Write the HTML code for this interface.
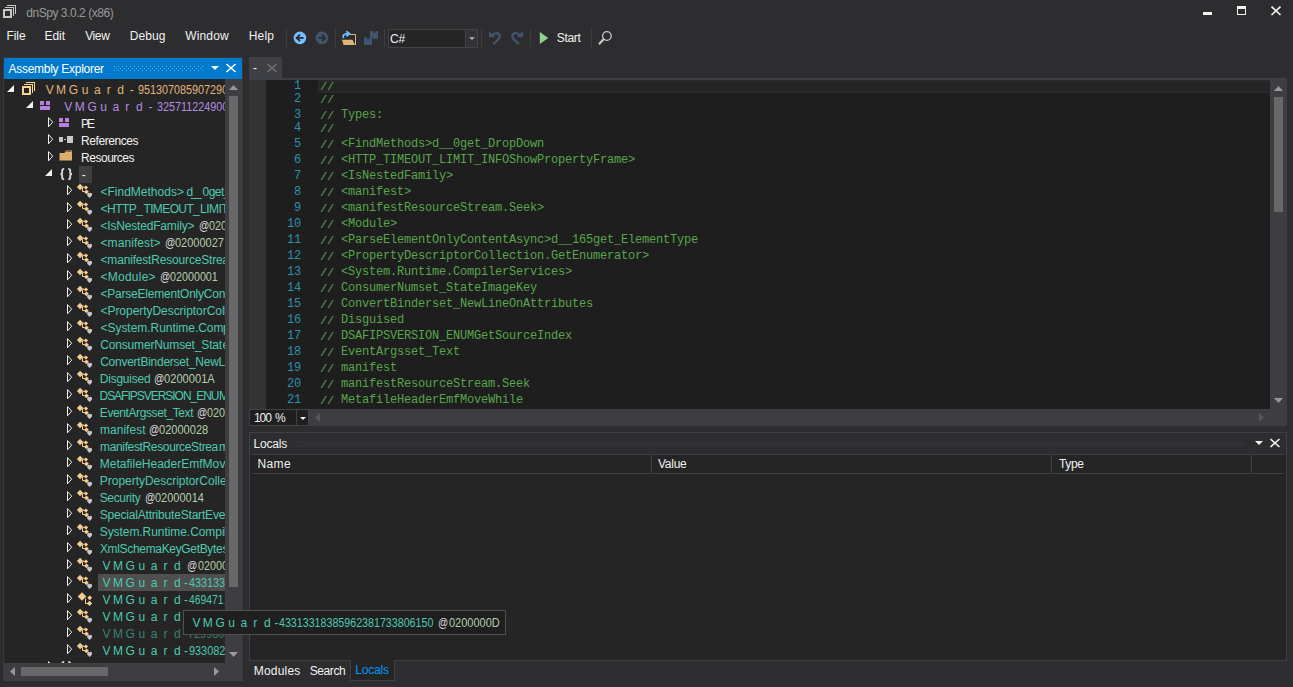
<!DOCTYPE html>
<html><head><meta charset="utf-8"><title>dnSpy</title><style>
*{box-sizing:border-box;margin:0;padding:0}
html,body{width:1293px;height:687px;overflow:hidden;background:#2d2d30}
body{position:relative;font-family:"Liberation Sans",sans-serif;font-size:12px;color:#f1f1f1}
.a{position:absolute}
.t{position:absolute;white-space:pre;line-height:14px;height:14px}
.mono{font-family:"Liberation Mono",monospace;font-size:12px;letter-spacing:-0.2px}
.row{position:absolute;left:0;height:17px;width:400px}
.lbl{position:absolute;top:1px;white-space:pre;line-height:14px;letter-spacing:-0.3px;color:#4ec9b0}
.lbl i{font-style:normal;color:#b5cea8}
.lbl b{font-weight:normal;color:#dcdcdc}
.sp{letter-spacing:5.6px}
svg{position:absolute;overflow:visible}
.cl{position:absolute;left:320px;white-space:pre;color:#57a64a;line-height:14px;height:14px}
.sl{display:inline-block;transform:translateY(1px) scaleY(.86);transform-origin:50% 78.6%}
.ln{position:absolute;left:266px;width:35px;text-align:right;white-space:pre;color:#2b91af;line-height:14px;height:14px}
</style></head><body>
<svg style="left:3px;top:5px" width="13" height="13" viewBox="0 0 13 13" shape-rendering="crispEdges">
<g fill="none" stroke="#c8c8c8">
<rect x="1" y="5" width="7" height="7" stroke-width="2"/>
<path d="M2.5 3V2.5H10.5V10.5H10" stroke-width="1"/>
<path d="M4.5 1V0.5H12.5V8.5H12" stroke-width="1"/>
</g></svg>
<div class="t" style="left:26.20px;letter-spacing:-0.450px;top:6px;color:#999999;">dnSpy 3.0.2 (x86)</div>
<div class="a" style="left:1203px;top:12px;width:9px;height:3px;background:#f1f1f1"></div>
<div class="a" style="left:1237px;top:6px;width:9px;height:9px;border:1px solid #f1f1f1;border-top-width:3px"></div>
<svg style="left:1271px;top:6px" width="10" height="9" viewBox="0 0 10 9"><path d="M0.5 0.6L9.5 9M9.5 0.6L0.5 9" stroke="#f1f1f1" stroke-width="1.7" fill="none"/></svg>
<div class="t" style="left:6.60px;letter-spacing:-0.117px;top:29px;">File</div>
<div class="t" style="left:44.60px;letter-spacing:-0.075px;top:29px;">Edit</div>
<div class="t" style="left:85.20px;letter-spacing:-0.392px;top:29px;">View</div>
<div class="t" style="left:129.80px;letter-spacing:0.094px;top:29px;">Debug</div>
<div class="t" style="left:185.20px;letter-spacing:0.170px;top:29px;">Window</div>
<div class="t" style="left:248.70px;letter-spacing:0.183px;top:29px;">Help</div>
<div class="a" style="left:286px;top:29px;width:1px;height:18px;background:#3d3d41"></div>
<div class="a" style="left:335px;top:29px;width:1px;height:18px;background:#3d3d41"></div>
<div class="a" style="left:384px;top:29px;width:1px;height:18px;background:#3d3d41"></div>
<div class="a" style="left:481px;top:29px;width:1px;height:18px;background:#3d3d41"></div>
<div class="a" style="left:530px;top:29px;width:1px;height:18px;background:#3d3d41"></div>
<div class="a" style="left:591px;top:29px;width:1px;height:18px;background:#3d3d41"></div>
<svg style="left:293px;top:31px" width="14" height="14" viewBox="0 0 14 14"><circle cx="6.9" cy="6.9" r="6.3" fill="#75beff"/><path d="M10.6 6.9H4.4M7 3.6L3.7 6.9L7 10.2" stroke="#2d2d30" stroke-width="1.9" fill="none"/></svg>
<svg style="left:315px;top:31px" width="14" height="14" viewBox="0 0 14 14"><circle cx="7" cy="6.9" r="6.3" fill="#41566e"/><path d="M3.4 6.9H9.6M7 3.6L10.3 6.9L7 10.2" stroke="#2d2d30" stroke-width="1.9" fill="none"/></svg>
<svg style="left:341px;top:30px" width="16" height="16" viewBox="0 0 16 16"><path d="M9 4.5H14.5V15" stroke="#dcb67a" stroke-width="1" fill="none"/><path d="M1 9.8H11.5L14 15H2.6Z" fill="#dcb67a"/><path d="M2.6 8.2C1.2 5.5 3 3.6 6.5 3.6M5.3 1.2L8.6 3.7L5.3 6.3" stroke="#75beff" stroke-width="1.7" fill="none"/></svg>
<svg style="left:364px;top:31px" width="14" height="14" viewBox="0 0 14 14"><path d="M6 0H14V7.7H8.6V6H6ZM9.3 0V1.8H11.7V0Z" fill="#41566e" fill-rule="evenodd"/><path d="M0 6.2H8V14H0ZM2.9 6.2V8H5.3V6.2Z" fill="#41566e" fill-rule="evenodd"/></svg>
<div class="a" style="left:388px;top:29px;width:90px;height:19px;border:1px solid #434346;background:#252526"></div>
<div class="a" style="left:465px;top:30px;width:12px;height:17px;background:#333337;border-left:1px solid #434346"></div>
<svg style="left:469px;top:37px" width="6" height="3" viewBox="0 0 6 3"><path d="M0 0H6L3 3.2Z" fill="#a0a0a0"/></svg>
<div class="t" style="left:389.88px;letter-spacing:0.075px;top:32px;">C#</div>
<svg style="left:489px;top:31px" width="12" height="14" viewBox="0 0 12 14"><path d="M0 0V6.3H6.3Z" fill="#41566e"/><path d="M3.5 4.2C6 0.8 10.7 1.8 10.7 5.4C10.7 7.4 8.5 9.3 4 13.2" stroke="#41566e" stroke-width="2.3" fill="none"/></svg>
<svg style="left:511px;top:31px" width="12" height="14" viewBox="0 0 12 14"><path d="M12 0V6.3H5.7Z" fill="#41566e"/><path d="M8.5 4.2C6 0.8 1.3 1.8 1.3 5.4C1.3 7.4 3.5 9.3 8 13.2" stroke="#41566e" stroke-width="2.3" fill="none"/></svg>
<svg style="left:539px;top:32px" width="10" height="12" viewBox="0 0 10 12"><path d="M0.8 0L9.3 6L0.8 12Z" fill="#8dd28a"/></svg>
<div class="t" style="left:556.70px;letter-spacing:-0.288px;top:31px;">Start</div>
<svg style="left:598px;top:30px" width="15" height="15" viewBox="0 0 15 15"><circle cx="8.9" cy="6" r="4.3" stroke="#c8c8c8" stroke-width="1.3" fill="none"/><path d="M5.6 9.3L1.6 13.6" stroke="#c8c8c8" stroke-width="2.2" stroke-linecap="round"/></svg>
<div class="a" style="left:3px;top:57px;width:240px;height:624px;background:#38383c"></div>
<div class="a" style="left:4px;top:58px;width:238px;height:21px;background:#007acc"></div>
<div class="t" style="left:8.5px;top:62px;color:#fff;letter-spacing:-0.28px">Assembly Explorer</div>
<svg style="left:114px;top:66px" width="89" height="5" viewBox="0 0 89 5" shape-rendering="crispEdges"><defs><pattern id="gb" width="4" height="4" patternUnits="userSpaceOnUse"><rect x="0" y="0" width="1" height="1" fill="#59a8de"/><rect x="2" y="2" width="1" height="1" fill="#59a8de"/></pattern></defs><rect width="89" height="5" fill="url(#gb)"/></svg>
<svg style="left:211px;top:66px" width="8" height="4" viewBox="0 0 8 4"><path d="M0 0H8L4 4Z" fill="#fff"/></svg>
<svg style="left:226px;top:64px" width="10" height="8" viewBox="0 0 10 8"><path d="M0.5 0L9.5 8M9.5 0L0.5 8" stroke="#fff" stroke-width="1.6" fill="none"/></svg>
<div class="a" id="tree" style="left:4px;top:79px;width:221px;height:584px;background:#252526;overflow:hidden">
<div class="row" style="top:1px;"><svg style="left:3px;top:5px" width="7" height="7" viewBox="0 0 7 7"><path d="M7 0V7H0Z" fill="#f1f1f1"/></svg><svg style="left:18px;top:2px" width="13" height="13" viewBox="0 0 13 13" shape-rendering="crispEdges"><g fill="none" stroke="#fbd490">
<rect x="1" y="5" width="7" height="7" stroke-width="2"/><path d="M2.5 3V2.5H10.5V10.5H10" /><path d="M4.5 1V0.5H12.5V8.5H12"/></g></svg><div class="t" style="left:41.70px;letter-spacing:-0.300px;top:3px;color:#e2b47c;">V</div><div class="t" style="left:52.10px;letter-spacing:-0.300px;top:3px;color:#e2b47c;">M</div><div class="t" style="left:64.78px;letter-spacing:-0.300px;top:3px;color:#e2b47c;">G</div><div class="t" style="left:77.65px;letter-spacing:-0.300px;top:3px;color:#e2b47c;">u</div><div class="t" style="left:89.90px;letter-spacing:-0.300px;top:3px;color:#e2b47c;">a</div><div class="t" style="left:102.65px;letter-spacing:-0.300px;top:3px;color:#e2b47c;">r</div><div class="t" style="left:113.30px;letter-spacing:-0.300px;top:3px;color:#e2b47c;">d</div><div class="t" style="left:125.70px;letter-spacing:-0.300px;top:3px;color:#e2b47c;">-</div><div class="t" style="left:133.95px;transform:scaleX(0.9000);transform-origin:0 0;top:3px;color:#e2b47c;">9513070859072900</div></div>
<div class="row" style="top:18px;"><svg style="left:22px;top:4px" width="7" height="7" viewBox="0 0 7 7"><path d="M7 0V7H0Z" fill="#f1f1f1"/></svg><svg style="left:36px;top:4px" width="10" height="9" viewBox="0 0 10 9" shape-rendering="crispEdges"><path d="M0 0H4V4H0ZM6 0H10V4H6ZM0 5H10V9H0Z" fill="#b981dc"/></svg><div class="t" style="left:60.30px;letter-spacing:-0.300px;top:3px;color:#b48be0;">V</div><div class="t" style="left:70.70px;letter-spacing:-0.300px;top:3px;color:#b48be0;">M</div><div class="t" style="left:83.38px;letter-spacing:-0.300px;top:3px;color:#b48be0;">G</div><div class="t" style="left:96.25px;letter-spacing:-0.300px;top:3px;color:#b48be0;">u</div><div class="t" style="left:108.50px;letter-spacing:-0.300px;top:3px;color:#b48be0;">a</div><div class="t" style="left:121.25px;letter-spacing:-0.300px;top:3px;color:#b48be0;">r</div><div class="t" style="left:131.90px;letter-spacing:-0.300px;top:3px;color:#b48be0;">d</div><div class="t" style="left:144.50px;letter-spacing:-0.300px;top:3px;color:#b48be0;">-</div><div class="t" style="left:152.75px;transform:scaleX(0.9000);transform-origin:0 0;top:3px;color:#b48be0;">3257112249000</div></div>
<div class="row" style="top:35px;"><svg style="left:43.5px;top:3px" width="6" height="11" viewBox="0 0 6 11"><path d="M0.5 0.6L4.7 5.2L0.5 9.8Z" fill="none" stroke="#f1f1f1" stroke-width="1"/></svg><svg style="left:55px;top:4px" width="10" height="9" viewBox="0 0 10 9" shape-rendering="crispEdges"><path d="M0 0H4V4H0ZM6 0H10V4H6ZM0 5H10V9H0Z" fill="#b981dc"/></svg><div class="t" style="left:77.10px;letter-spacing:-2.200px;top:3px;color:#f1f1f1;">PE</div></div>
<div class="row" style="top:52px;"><svg style="left:43.5px;top:3px" width="6" height="11" viewBox="0 0 6 11"><path d="M0.5 0.6L4.7 5.2L0.5 9.8Z" fill="none" stroke="#f1f1f1" stroke-width="1"/></svg><svg style="left:55px;top:5px" width="14" height="8" viewBox="0 0 14 8" shape-rendering="crispEdges"><path d="M0 1H4V6H0ZM5 3H7V4H5ZM8 0H14V7H8Z" fill="#c8c8c8"/></svg><div class="t" style="left:77.10px;letter-spacing:-0.433px;top:3px;color:#f1f1f1;">References</div></div>
<div class="row" style="top:69px;"><svg style="left:43.5px;top:3px" width="6" height="11" viewBox="0 0 6 11"><path d="M0.5 0.6L4.7 5.2L0.5 9.8Z" fill="none" stroke="#f1f1f1" stroke-width="1"/></svg><svg style="left:55px;top:2px" width="14" height="11" viewBox="0 0 14 11"><path d="M0.5 3H5.5L7 0.5H13V10.5H0.5Z" fill="#dcb06c"/><path d="M7.3 1.5H12.3" stroke="#252526" stroke-width="0.6"/></svg><div class="t" style="left:77.10px;letter-spacing:-0.488px;top:3px;color:#f1f1f1;">Resources</div></div>
<div class="row" style="top:86px;"><svg style="left:41px;top:4px" width="7" height="7" viewBox="0 0 7 7"><path d="M7 0V7H0Z" fill="#f1f1f1"/></svg><svg style="left:56px;top:3px" width="13" height="13" viewBox="0 0 13 13" fill="none" stroke="#d8d8d8" stroke-width="1.9"><path d="M4.2 0.9C2.3 0.9 2.2 1.6 2.2 2.6V4.4C2.2 5.5 1.8 6.1 0.4 6.1C1.8 6.1 2.2 6.8 2.2 7.8V9.6C2.2 10.7 2.3 11.4 4.2 11.4"/><path d="M8.2 0.9C10.1 0.9 10.2 1.6 10.2 2.6V4.4C10.2 5.5 10.6 6.1 12 6.1C10.6 6.1 10.2 6.8 10.2 7.8V9.6C10.2 10.7 10.1 11.4 8.2 11.4"/></svg><div class="a" style="left:75px;top:1px;width:13px;height:17px;background:#3f3f41"></div><div class="t" style="left:77.80px;letter-spacing:-0.300px;top:3px;color:#f1f1f1;">-</div></div>
<div class="row" style="top:103px;"><svg style="left:62.5px;top:3px" width="6" height="11" viewBox="0 0 6 11"><path d="M0.5 0.6L4.7 5.2L0.5 9.8Z" fill="none" stroke="#f1f1f1" stroke-width="1"/></svg><svg style="left:73px;top:1px" width="16" height="16" viewBox="0 0 16 16">
<path d="M3.1 0.8L6.3 4L3.1 7.2L-0.1 4Z" fill="#f8cc8e"/>
<path d="M8.9 2.4L11.1 4.5L8.9 6.6L6.7 4.5Z" fill="#f8cc8e"/>
<path d="M9.5 6.5L12 8.9L9.5 11.3L7 8.9Z" fill="#f8cc8e"/>
<path d="M5.5 5V8.5H7.6M5.8 4.2H7.2" stroke="#f8cc8e" stroke-width="1" fill="none"/><path d="M12.6 15.1C11.2 13.8 10.1 12.9 10.1 11.6C10.1 10.5 10.8 9.7 11.55 9.7C12.05 9.7 12.45 10.05 12.6 10.5C12.75 10.05 13.15 9.7 13.65 9.7C14.4 9.7 15.1 10.5 15.1 11.6C15.1 12.9 14 13.8 12.6 15.1Z" fill="#c8c8c8" stroke="#252526" stroke-width="0.7" paint-order="stroke"/></svg><div class="t" style="left:96.50px;letter-spacing:0.002px;top:3px;color:#4ec9b0;">&lt;FindMethods&gt;</div><div class="t" style="left:182.50px;letter-spacing:-2.275px;top:3px;color:#4ec9b0;">d__</div><div class="t" style="left:198.50px;letter-spacing:-0.500px;top:3px;color:#4ec9b0;">0get_DropDown</div></div>
<div class="row" style="top:120px;"><svg style="left:62.5px;top:3px" width="6" height="11" viewBox="0 0 6 11"><path d="M0.5 0.6L4.7 5.2L0.5 9.8Z" fill="none" stroke="#f1f1f1" stroke-width="1"/></svg><svg style="left:73px;top:1px" width="16" height="16" viewBox="0 0 16 16">
<path d="M3.1 0.8L6.3 4L3.1 7.2L-0.1 4Z" fill="#f8cc8e"/>
<path d="M8.9 2.4L11.1 4.5L8.9 6.6L6.7 4.5Z" fill="#f8cc8e"/>
<path d="M9.5 6.5L12 8.9L9.5 11.3L7 8.9Z" fill="#f8cc8e"/>
<path d="M5.5 5V8.5H7.6M5.8 4.2H7.2" stroke="#f8cc8e" stroke-width="1" fill="none"/><path d="M12.6 15.1C11.2 13.8 10.1 12.9 10.1 11.6C10.1 10.5 10.8 9.7 11.55 9.7C12.05 9.7 12.45 10.05 12.6 10.5C12.75 10.05 13.15 9.7 13.65 9.7C14.4 9.7 15.1 10.5 15.1 11.6C15.1 12.9 14 13.8 12.6 15.1Z" fill="#c8c8c8" stroke="#252526" stroke-width="0.7" paint-order="stroke"/></svg><div class="t" style="left:96.50px;letter-spacing:-0.510px;top:3px;color:#4ec9b0;">&lt;HTTP_</div><div class="t" style="left:139.45px;letter-spacing:-0.618px;top:3px;color:#4ec9b0;">TIMEOUT_</div><div class="t" style="left:196.00px;letter-spacing:-0.500px;top:3px;color:#4ec9b0;">LIMIT_INFOShowPropertyFrame&gt;</div></div>
<div class="row" style="top:137px;"><svg style="left:62.5px;top:3px" width="6" height="11" viewBox="0 0 6 11"><path d="M0.5 0.6L4.7 5.2L0.5 9.8Z" fill="none" stroke="#f1f1f1" stroke-width="1"/></svg><svg style="left:73px;top:1px" width="16" height="16" viewBox="0 0 16 16">
<path d="M3.1 0.8L6.3 4L3.1 7.2L-0.1 4Z" fill="#f8cc8e"/>
<path d="M8.9 2.4L11.1 4.5L8.9 6.6L6.7 4.5Z" fill="#f8cc8e"/>
<path d="M9.5 6.5L12 8.9L9.5 11.3L7 8.9Z" fill="#f8cc8e"/>
<path d="M5.5 5V8.5H7.6M5.8 4.2H7.2" stroke="#f8cc8e" stroke-width="1" fill="none"/><path d="M12.6 15.1C11.2 13.8 10.1 12.9 10.1 11.6C10.1 10.5 10.8 9.7 11.55 9.7C12.05 9.7 12.45 10.05 12.6 10.5C12.75 10.05 13.15 9.7 13.65 9.7C14.4 9.7 15.1 10.5 15.1 11.6C15.1 12.9 14 13.8 12.6 15.1Z" fill="#c8c8c8" stroke="#252526" stroke-width="0.7" paint-order="stroke"/></svg><div class="t" style="left:96.50px;letter-spacing:-0.183px;top:3px;color:#4ec9b0;">&lt;IsNestedFamily&gt;</div><div class="t" style="left:195.26px;transform:scaleX(0.8488);transform-origin:0 0;top:3px;color:#dcdcdc;">@</div><div class="t" style="left:204.55px;transform:scaleX(0.9000);transform-origin:0 0;top:3px;color:#b5cea8;">02000026</div></div>
<div class="row" style="top:154px;"><svg style="left:62.5px;top:3px" width="6" height="11" viewBox="0 0 6 11"><path d="M0.5 0.6L4.7 5.2L0.5 9.8Z" fill="none" stroke="#f1f1f1" stroke-width="1"/></svg><svg style="left:73px;top:1px" width="16" height="16" viewBox="0 0 16 16">
<path d="M3.1 0.8L6.3 4L3.1 7.2L-0.1 4Z" fill="#f8cc8e"/>
<path d="M8.9 2.4L11.1 4.5L8.9 6.6L6.7 4.5Z" fill="#f8cc8e"/>
<path d="M9.5 6.5L12 8.9L9.5 11.3L7 8.9Z" fill="#f8cc8e"/>
<path d="M5.5 5V8.5H7.6M5.8 4.2H7.2" stroke="#f8cc8e" stroke-width="1" fill="none"/><path d="M12.6 15.1C11.2 13.8 10.1 12.9 10.1 11.6C10.1 10.5 10.8 9.7 11.55 9.7C12.05 9.7 12.45 10.05 12.6 10.5C12.75 10.05 13.15 9.7 13.65 9.7C14.4 9.7 15.1 10.5 15.1 11.6C15.1 12.9 14 13.8 12.6 15.1Z" fill="#c8c8c8" stroke="#252526" stroke-width="0.7" paint-order="stroke"/></svg><div class="t" style="left:96.50px;letter-spacing:0.081px;top:3px;color:#4ec9b0;">&lt;manifest&gt;</div><div class="t" style="left:161.06px;transform:scaleX(0.8488);transform-origin:0 0;top:3px;color:#dcdcdc;">@</div><div class="t" style="left:170.94px;transform:scaleX(0.9165);transform-origin:0 0;top:3px;color:#b5cea8;">02000027</div></div>
<div class="row" style="top:171px;"><svg style="left:62.5px;top:3px" width="6" height="11" viewBox="0 0 6 11"><path d="M0.5 0.6L4.7 5.2L0.5 9.8Z" fill="none" stroke="#f1f1f1" stroke-width="1"/></svg><svg style="left:73px;top:1px" width="16" height="16" viewBox="0 0 16 16">
<path d="M3.1 0.8L6.3 4L3.1 7.2L-0.1 4Z" fill="#f8cc8e"/>
<path d="M8.9 2.4L11.1 4.5L8.9 6.6L6.7 4.5Z" fill="#f8cc8e"/>
<path d="M9.5 6.5L12 8.9L9.5 11.3L7 8.9Z" fill="#f8cc8e"/>
<path d="M5.5 5V8.5H7.6M5.8 4.2H7.2" stroke="#f8cc8e" stroke-width="1" fill="none"/><path d="M12.6 15.1C11.2 13.8 10.1 12.9 10.1 11.6C10.1 10.5 10.8 9.7 11.55 9.7C12.05 9.7 12.45 10.05 12.6 10.5C12.75 10.05 13.15 9.7 13.65 9.7C14.4 9.7 15.1 10.5 15.1 11.6C15.1 12.9 14 13.8 12.6 15.1Z" fill="#c8c8c8" stroke="#252526" stroke-width="0.7" paint-order="stroke"/></svg><div class="t" style="left:96.50px;letter-spacing:-0.176px;top:3px;color:#4ec9b0;">&lt;manifestResourceStre</div><div class="t" style="left:218.30px;letter-spacing:-0.300px;top:3px;color:#4ec9b0;">am.Seek&gt;</div></div>
<div class="row" style="top:188px;"><svg style="left:62.5px;top:3px" width="6" height="11" viewBox="0 0 6 11"><path d="M0.5 0.6L4.7 5.2L0.5 9.8Z" fill="none" stroke="#f1f1f1" stroke-width="1"/></svg><svg style="left:73px;top:1px" width="16" height="16" viewBox="0 0 16 16">
<path d="M3.1 0.8L6.3 4L3.1 7.2L-0.1 4Z" fill="#f8cc8e"/>
<path d="M8.9 2.4L11.1 4.5L8.9 6.6L6.7 4.5Z" fill="#f8cc8e"/>
<path d="M9.5 6.5L12 8.9L9.5 11.3L7 8.9Z" fill="#f8cc8e"/>
<path d="M5.5 5V8.5H7.6M5.8 4.2H7.2" stroke="#f8cc8e" stroke-width="1" fill="none"/><path d="M12.6 15.1C11.2 13.8 10.1 12.9 10.1 11.6C10.1 10.5 10.8 9.7 11.55 9.7C12.05 9.7 12.45 10.05 12.6 10.5C12.75 10.05 13.15 9.7 13.65 9.7C14.4 9.7 15.1 10.5 15.1 11.6C15.1 12.9 14 13.8 12.6 15.1Z" fill="#c8c8c8" stroke="#252526" stroke-width="0.7" paint-order="stroke"/></svg><div class="t" style="left:96.50px;letter-spacing:0.246px;top:3px;color:#4ec9b0;">&lt;Module&gt;</div><div class="t" style="left:156.06px;transform:scaleX(0.8488);transform-origin:0 0;top:3px;color:#dcdcdc;">@</div><div class="t" style="left:166.45px;transform:scaleX(0.8955);transform-origin:0 0;top:3px;color:#b5cea8;">02000001</div></div>
<div class="row" style="top:205px;"><svg style="left:62.5px;top:3px" width="6" height="11" viewBox="0 0 6 11"><path d="M0.5 0.6L4.7 5.2L0.5 9.8Z" fill="none" stroke="#f1f1f1" stroke-width="1"/></svg><svg style="left:73px;top:1px" width="16" height="16" viewBox="0 0 16 16">
<path d="M3.1 0.8L6.3 4L3.1 7.2L-0.1 4Z" fill="#f8cc8e"/>
<path d="M8.9 2.4L11.1 4.5L8.9 6.6L6.7 4.5Z" fill="#f8cc8e"/>
<path d="M9.5 6.5L12 8.9L9.5 11.3L7 8.9Z" fill="#f8cc8e"/>
<path d="M5.5 5V8.5H7.6M5.8 4.2H7.2" stroke="#f8cc8e" stroke-width="1" fill="none"/><path d="M12.6 15.1C11.2 13.8 10.1 12.9 10.1 11.6C10.1 10.5 10.8 9.7 11.55 9.7C12.05 9.7 12.45 10.05 12.6 10.5C12.75 10.05 13.15 9.7 13.65 9.7C14.4 9.7 15.1 10.5 15.1 11.6C15.1 12.9 14 13.8 12.6 15.1Z" fill="#c8c8c8" stroke="#252526" stroke-width="0.7" paint-order="stroke"/></svg><div class="t" style="left:96.50px;letter-spacing:-0.218px;top:3px;color:#4ec9b0;">&lt;ParseElementOnlyCon</div><div class="t" style="left:221.47px;letter-spacing:-0.300px;top:3px;color:#4ec9b0;">tentAsync&gt;</div></div>
<div class="row" style="top:222px;"><svg style="left:62.5px;top:3px" width="6" height="11" viewBox="0 0 6 11"><path d="M0.5 0.6L4.7 5.2L0.5 9.8Z" fill="none" stroke="#f1f1f1" stroke-width="1"/></svg><svg style="left:73px;top:1px" width="16" height="16" viewBox="0 0 16 16">
<path d="M3.1 0.8L6.3 4L3.1 7.2L-0.1 4Z" fill="#f8cc8e"/>
<path d="M8.9 2.4L11.1 4.5L8.9 6.6L6.7 4.5Z" fill="#f8cc8e"/>
<path d="M9.5 6.5L12 8.9L9.5 11.3L7 8.9Z" fill="#f8cc8e"/>
<path d="M5.5 5V8.5H7.6M5.8 4.2H7.2" stroke="#f8cc8e" stroke-width="1" fill="none"/><path d="M12.6 15.1C11.2 13.8 10.1 12.9 10.1 11.6C10.1 10.5 10.8 9.7 11.55 9.7C12.05 9.7 12.45 10.05 12.6 10.5C12.75 10.05 13.15 9.7 13.65 9.7C14.4 9.7 15.1 10.5 15.1 11.6C15.1 12.9 14 13.8 12.6 15.1Z" fill="#c8c8c8" stroke="#252526" stroke-width="0.7" paint-order="stroke"/></svg><div class="t" style="left:96.50px;letter-spacing:-0.045px;top:3px;color:#4ec9b0;">&lt;PropertyDescriptorCol</div><div class="t" style="left:220.05px;letter-spacing:-0.300px;top:3px;color:#4ec9b0;">lection</div></div>
<div class="row" style="top:239px;"><svg style="left:62.5px;top:3px" width="6" height="11" viewBox="0 0 6 11"><path d="M0.5 0.6L4.7 5.2L0.5 9.8Z" fill="none" stroke="#f1f1f1" stroke-width="1"/></svg><svg style="left:73px;top:1px" width="16" height="16" viewBox="0 0 16 16">
<path d="M3.1 0.8L6.3 4L3.1 7.2L-0.1 4Z" fill="#f8cc8e"/>
<path d="M8.9 2.4L11.1 4.5L8.9 6.6L6.7 4.5Z" fill="#f8cc8e"/>
<path d="M9.5 6.5L12 8.9L9.5 11.3L7 8.9Z" fill="#f8cc8e"/>
<path d="M5.5 5V8.5H7.6M5.8 4.2H7.2" stroke="#f8cc8e" stroke-width="1" fill="none"/><path d="M12.6 15.1C11.2 13.8 10.1 12.9 10.1 11.6C10.1 10.5 10.8 9.7 11.55 9.7C12.05 9.7 12.45 10.05 12.6 10.5C12.75 10.05 13.15 9.7 13.65 9.7C14.4 9.7 15.1 10.5 15.1 11.6C15.1 12.9 14 13.8 12.6 15.1Z" fill="#c8c8c8" stroke="#252526" stroke-width="0.7" paint-order="stroke"/></svg><div class="t" style="left:96.50px;letter-spacing:-0.039px;top:3px;color:#4ec9b0;">&lt;System.Runtime.Com</div><div class="t" style="left:219.05px;letter-spacing:-0.300px;top:3px;color:#4ec9b0;">pilerServices&gt;</div></div>
<div class="row" style="top:256px;"><svg style="left:62.5px;top:3px" width="6" height="11" viewBox="0 0 6 11"><path d="M0.5 0.6L4.7 5.2L0.5 9.8Z" fill="none" stroke="#f1f1f1" stroke-width="1"/></svg><svg style="left:73px;top:1px" width="16" height="16" viewBox="0 0 16 16">
<path d="M3.1 0.8L6.3 4L3.1 7.2L-0.1 4Z" fill="#f8cc8e"/>
<path d="M8.9 2.4L11.1 4.5L8.9 6.6L6.7 4.5Z" fill="#f8cc8e"/>
<path d="M9.5 6.5L12 8.9L9.5 11.3L7 8.9Z" fill="#f8cc8e"/>
<path d="M5.5 5V8.5H7.6M5.8 4.2H7.2" stroke="#f8cc8e" stroke-width="1" fill="none"/><path d="M12.6 15.1C11.2 13.8 10.1 12.9 10.1 11.6C10.1 10.5 10.8 9.7 11.55 9.7C12.05 9.7 12.45 10.05 12.6 10.5C12.75 10.05 13.15 9.7 13.65 9.7C14.4 9.7 15.1 10.5 15.1 11.6C15.1 12.9 14 13.8 12.6 15.1Z" fill="#c8c8c8" stroke="#252526" stroke-width="0.7" paint-order="stroke"/></svg><div class="t" style="left:96.17px;letter-spacing:-0.150px;top:3px;color:#4ec9b0;">ConsumerNumset_Stat</div><div class="t" style="left:218.40px;letter-spacing:-0.300px;top:3px;color:#4ec9b0;">eImageKey</div></div>
<div class="row" style="top:273px;"><svg style="left:62.5px;top:3px" width="6" height="11" viewBox="0 0 6 11"><path d="M0.5 0.6L4.7 5.2L0.5 9.8Z" fill="none" stroke="#f1f1f1" stroke-width="1"/></svg><svg style="left:73px;top:1px" width="16" height="16" viewBox="0 0 16 16">
<path d="M3.1 0.8L6.3 4L3.1 7.2L-0.1 4Z" fill="#f8cc8e"/>
<path d="M8.9 2.4L11.1 4.5L8.9 6.6L6.7 4.5Z" fill="#f8cc8e"/>
<path d="M9.5 6.5L12 8.9L9.5 11.3L7 8.9Z" fill="#f8cc8e"/>
<path d="M5.5 5V8.5H7.6M5.8 4.2H7.2" stroke="#f8cc8e" stroke-width="1" fill="none"/><path d="M12.6 15.1C11.2 13.8 10.1 12.9 10.1 11.6C10.1 10.5 10.8 9.7 11.55 9.7C12.05 9.7 12.45 10.05 12.6 10.5C12.75 10.05 13.15 9.7 13.65 9.7C14.4 9.7 15.1 10.5 15.1 11.6C15.1 12.9 14 13.8 12.6 15.1Z" fill="#c8c8c8" stroke="#252526" stroke-width="0.7" paint-order="stroke"/></svg><div class="t" style="left:96.17px;letter-spacing:-0.250px;top:3px;color:#4ec9b0;">ConvertBinderset_NewL</div><div class="t" style="left:221.25px;letter-spacing:-0.300px;top:3px;color:#4ec9b0;">ineOnAttributes</div></div>
<div class="row" style="top:290px;"><svg style="left:62.5px;top:3px" width="6" height="11" viewBox="0 0 6 11"><path d="M0.5 0.6L4.7 5.2L0.5 9.8Z" fill="none" stroke="#f1f1f1" stroke-width="1"/></svg><svg style="left:73px;top:1px" width="16" height="16" viewBox="0 0 16 16">
<path d="M3.1 0.8L6.3 4L3.1 7.2L-0.1 4Z" fill="#f8cc8e"/>
<path d="M8.9 2.4L11.1 4.5L8.9 6.6L6.7 4.5Z" fill="#f8cc8e"/>
<path d="M9.5 6.5L12 8.9L9.5 11.3L7 8.9Z" fill="#f8cc8e"/>
<path d="M5.5 5V8.5H7.6M5.8 4.2H7.2" stroke="#f8cc8e" stroke-width="1" fill="none"/><path d="M12.6 15.1C11.2 13.8 10.1 12.9 10.1 11.6C10.1 10.5 10.8 9.7 11.55 9.7C12.05 9.7 12.45 10.05 12.6 10.5C12.75 10.05 13.15 9.7 13.65 9.7C14.4 9.7 15.1 10.5 15.1 11.6C15.1 12.9 14 13.8 12.6 15.1Z" fill="#c8c8c8" stroke="#252526" stroke-width="0.7" paint-order="stroke"/></svg><div class="t" style="left:95.80px;letter-spacing:-0.234px;top:3px;color:#4ec9b0;">Disguised</div><div class="t" style="left:150.36px;transform:scaleX(0.8488);transform-origin:0 0;top:3px;color:#dcdcdc;">@</div><div class="t" style="left:160.34px;transform:scaleX(0.9272);transform-origin:0 0;top:3px;color:#b5cea8;">0200001A</div></div>
<div class="row" style="top:307px;"><svg style="left:62.5px;top:3px" width="6" height="11" viewBox="0 0 6 11"><path d="M0.5 0.6L4.7 5.2L0.5 9.8Z" fill="none" stroke="#f1f1f1" stroke-width="1"/></svg><svg style="left:73px;top:1px" width="16" height="16" viewBox="0 0 16 16">
<path d="M3.1 0.8L6.3 4L3.1 7.2L-0.1 4Z" fill="#f8cc8e"/>
<path d="M8.9 2.4L11.1 4.5L8.9 6.6L6.7 4.5Z" fill="#f8cc8e"/>
<path d="M9.5 6.5L12 8.9L9.5 11.3L7 8.9Z" fill="#f8cc8e"/>
<path d="M5.5 5V8.5H7.6M5.8 4.2H7.2" stroke="#f8cc8e" stroke-width="1" fill="none"/><path d="M12.6 15.1C11.2 13.8 10.1 12.9 10.1 11.6C10.1 10.5 10.8 9.7 11.55 9.7C12.05 9.7 12.45 10.05 12.6 10.5C12.75 10.05 13.15 9.7 13.65 9.7C14.4 9.7 15.1 10.5 15.1 11.6C15.1 12.9 14 13.8 12.6 15.1Z" fill="#c8c8c8" stroke="#252526" stroke-width="0.7" paint-order="stroke"/></svg><div class="t" style="left:95.50px;letter-spacing:-1.024px;top:3px;color:#4ec9b0;">DSAFIPSVERSION_ENU</div><div class="t" style="left:215.10px;letter-spacing:-0.300px;top:3px;color:#4ec9b0;">MGetSourceIndex</div></div>
<div class="row" style="top:324px;"><svg style="left:62.5px;top:3px" width="6" height="11" viewBox="0 0 6 11"><path d="M0.5 0.6L4.7 5.2L0.5 9.8Z" fill="none" stroke="#f1f1f1" stroke-width="1"/></svg><svg style="left:73px;top:1px" width="16" height="16" viewBox="0 0 16 16">
<path d="M3.1 0.8L6.3 4L3.1 7.2L-0.1 4Z" fill="#f8cc8e"/>
<path d="M8.9 2.4L11.1 4.5L8.9 6.6L6.7 4.5Z" fill="#f8cc8e"/>
<path d="M9.5 6.5L12 8.9L9.5 11.3L7 8.9Z" fill="#f8cc8e"/>
<path d="M5.5 5V8.5H7.6M5.8 4.2H7.2" stroke="#f8cc8e" stroke-width="1" fill="none"/><path d="M12.6 15.1C11.2 13.8 10.1 12.9 10.1 11.6C10.1 10.5 10.8 9.7 11.55 9.7C12.05 9.7 12.45 10.05 12.6 10.5C12.75 10.05 13.15 9.7 13.65 9.7C14.4 9.7 15.1 10.5 15.1 11.6C15.1 12.9 14 13.8 12.6 15.1Z" fill="#c8c8c8" stroke="#252526" stroke-width="0.7" paint-order="stroke"/></svg><div class="t" style="left:95.80px;letter-spacing:-0.394px;top:3px;color:#4ec9b0;">EventArgsset_Text</div><div class="t" style="left:193.26px;transform:scaleX(0.8488);transform-origin:0 0;top:3px;color:#dcdcdc;">@</div><div class="t" style="left:203.35px;transform:scaleX(0.9000);transform-origin:0 0;top:3px;color:#b5cea8;">0200001C</div></div>
<div class="row" style="top:341px;"><svg style="left:62.5px;top:3px" width="6" height="11" viewBox="0 0 6 11"><path d="M0.5 0.6L4.7 5.2L0.5 9.8Z" fill="none" stroke="#f1f1f1" stroke-width="1"/></svg><svg style="left:73px;top:1px" width="16" height="16" viewBox="0 0 16 16">
<path d="M3.1 0.8L6.3 4L3.1 7.2L-0.1 4Z" fill="#f8cc8e"/>
<path d="M8.9 2.4L11.1 4.5L8.9 6.6L6.7 4.5Z" fill="#f8cc8e"/>
<path d="M9.5 6.5L12 8.9L9.5 11.3L7 8.9Z" fill="#f8cc8e"/>
<path d="M5.5 5V8.5H7.6M5.8 4.2H7.2" stroke="#f8cc8e" stroke-width="1" fill="none"/><path d="M12.6 15.1C11.2 13.8 10.1 12.9 10.1 11.6C10.1 10.5 10.8 9.7 11.55 9.7C12.05 9.7 12.45 10.05 12.6 10.5C12.75 10.05 13.15 9.7 13.65 9.7C14.4 9.7 15.1 10.5 15.1 11.6C15.1 12.9 14 13.8 12.6 15.1Z" fill="#c8c8c8" stroke="#252526" stroke-width="0.7" paint-order="stroke"/></svg><div class="t" style="left:96.05px;letter-spacing:0.014px;top:3px;color:#4ec9b0;">manifest</div><div class="t" style="left:145.06px;transform:scaleX(0.8488);transform-origin:0 0;top:3px;color:#dcdcdc;">@</div><div class="t" style="left:155.04px;transform:scaleX(0.9222);transform-origin:0 0;top:3px;color:#b5cea8;">02000028</div></div>
<div class="row" style="top:358px;"><svg style="left:62.5px;top:3px" width="6" height="11" viewBox="0 0 6 11"><path d="M0.5 0.6L4.7 5.2L0.5 9.8Z" fill="none" stroke="#f1f1f1" stroke-width="1"/></svg><svg style="left:73px;top:1px" width="16" height="16" viewBox="0 0 16 16">
<path d="M3.1 0.8L6.3 4L3.1 7.2L-0.1 4Z" fill="#f8cc8e"/>
<path d="M8.9 2.4L11.1 4.5L8.9 6.6L6.7 4.5Z" fill="#f8cc8e"/>
<path d="M9.5 6.5L12 8.9L9.5 11.3L7 8.9Z" fill="#f8cc8e"/>
<path d="M5.5 5V8.5H7.6M5.8 4.2H7.2" stroke="#f8cc8e" stroke-width="1" fill="none"/><path d="M12.6 15.1C11.2 13.8 10.1 12.9 10.1 11.6C10.1 10.5 10.8 9.7 11.55 9.7C12.05 9.7 12.45 10.05 12.6 10.5C12.75 10.05 13.15 9.7 13.65 9.7C14.4 9.7 15.1 10.5 15.1 11.6C15.1 12.9 14 13.8 12.6 15.1Z" fill="#c8c8c8" stroke="#252526" stroke-width="0.7" paint-order="stroke"/></svg><div class="t" style="left:96.05px;letter-spacing:-0.357px;top:3px;color:#4ec9b0;">manifestResourceStrea</div><div class="t" style="left:215.05px;letter-spacing:-0.300px;top:3px;color:#4ec9b0;">m.Seek</div></div>
<div class="row" style="top:375px;"><svg style="left:62.5px;top:3px" width="6" height="11" viewBox="0 0 6 11"><path d="M0.5 0.6L4.7 5.2L0.5 9.8Z" fill="none" stroke="#f1f1f1" stroke-width="1"/></svg><svg style="left:73px;top:1px" width="16" height="16" viewBox="0 0 16 16">
<path d="M3.1 0.8L6.3 4L3.1 7.2L-0.1 4Z" fill="#f8cc8e"/>
<path d="M8.9 2.4L11.1 4.5L8.9 6.6L6.7 4.5Z" fill="#f8cc8e"/>
<path d="M9.5 6.5L12 8.9L9.5 11.3L7 8.9Z" fill="#f8cc8e"/>
<path d="M5.5 5V8.5H7.6M5.8 4.2H7.2" stroke="#f8cc8e" stroke-width="1" fill="none"/><path d="M12.6 15.1C11.2 13.8 10.1 12.9 10.1 11.6C10.1 10.5 10.8 9.7 11.55 9.7C12.05 9.7 12.45 10.05 12.6 10.5C12.75 10.05 13.15 9.7 13.65 9.7C14.4 9.7 15.1 10.5 15.1 11.6C15.1 12.9 14 13.8 12.6 15.1Z" fill="#c8c8c8" stroke="#252526" stroke-width="0.7" paint-order="stroke"/></svg><div class="t" style="left:95.80px;letter-spacing:0.000px;top:3px;color:#4ec9b0;">MetafileHeaderEmfMo</div><div class="t" style="left:215.40px;letter-spacing:-0.300px;top:3px;color:#4ec9b0;">veWhile</div></div>
<div class="row" style="top:392px;"><svg style="left:62.5px;top:3px" width="6" height="11" viewBox="0 0 6 11"><path d="M0.5 0.6L4.7 5.2L0.5 9.8Z" fill="none" stroke="#f1f1f1" stroke-width="1"/></svg><svg style="left:73px;top:1px" width="16" height="16" viewBox="0 0 16 16">
<path d="M3.1 0.8L6.3 4L3.1 7.2L-0.1 4Z" fill="#f8cc8e"/>
<path d="M8.9 2.4L11.1 4.5L8.9 6.6L6.7 4.5Z" fill="#f8cc8e"/>
<path d="M9.5 6.5L12 8.9L9.5 11.3L7 8.9Z" fill="#f8cc8e"/>
<path d="M5.5 5V8.5H7.6M5.8 4.2H7.2" stroke="#f8cc8e" stroke-width="1" fill="none"/><path d="M12.6 15.1C11.2 13.8 10.1 12.9 10.1 11.6C10.1 10.5 10.8 9.7 11.55 9.7C12.05 9.7 12.45 10.05 12.6 10.5C12.75 10.05 13.15 9.7 13.65 9.7C14.4 9.7 15.1 10.5 15.1 11.6C15.1 12.9 14 13.8 12.6 15.1Z" fill="#c8c8c8" stroke="#252526" stroke-width="0.7" paint-order="stroke"/></svg><div class="t" style="left:95.80px;letter-spacing:-0.027px;top:3px;color:#4ec9b0;">PropertyDescriptorColl</div><div class="t" style="left:216.10px;letter-spacing:-0.300px;top:3px;color:#4ec9b0;">ection.GetEnumerator</div></div>
<div class="row" style="top:409px;"><svg style="left:62.5px;top:3px" width="6" height="11" viewBox="0 0 6 11"><path d="M0.5 0.6L4.7 5.2L0.5 9.8Z" fill="none" stroke="#f1f1f1" stroke-width="1"/></svg><svg style="left:73px;top:1px" width="16" height="16" viewBox="0 0 16 16">
<path d="M3.1 0.8L6.3 4L3.1 7.2L-0.1 4Z" fill="#f8cc8e"/>
<path d="M8.9 2.4L11.1 4.5L8.9 6.6L6.7 4.5Z" fill="#f8cc8e"/>
<path d="M9.5 6.5L12 8.9L9.5 11.3L7 8.9Z" fill="#f8cc8e"/>
<path d="M5.5 5V8.5H7.6M5.8 4.2H7.2" stroke="#f8cc8e" stroke-width="1" fill="none"/><path d="M12.6 15.1C11.2 13.8 10.1 12.9 10.1 11.6C10.1 10.5 10.8 9.7 11.55 9.7C12.05 9.7 12.45 10.05 12.6 10.5C12.75 10.05 13.15 9.7 13.65 9.7C14.4 9.7 15.1 10.5 15.1 11.6C15.1 12.9 14 13.8 12.6 15.1Z" fill="#c8c8c8" stroke="#252526" stroke-width="0.7" paint-order="stroke"/></svg><div class="t" style="left:95.70px;letter-spacing:-0.339px;top:3px;color:#4ec9b0;">Security</div><div class="t" style="left:140.96px;transform:scaleX(0.8488);transform-origin:0 0;top:3px;color:#dcdcdc;">@</div><div class="t" style="left:151.34px;transform:scaleX(0.9159);transform-origin:0 0;top:3px;color:#b5cea8;">02000014</div></div>
<div class="row" style="top:426px;"><svg style="left:62.5px;top:3px" width="6" height="11" viewBox="0 0 6 11"><path d="M0.5 0.6L4.7 5.2L0.5 9.8Z" fill="none" stroke="#f1f1f1" stroke-width="1"/></svg><svg style="left:73px;top:1px" width="16" height="16" viewBox="0 0 16 16">
<path d="M3.1 0.8L6.3 4L3.1 7.2L-0.1 4Z" fill="#f8cc8e"/>
<path d="M8.9 2.4L11.1 4.5L8.9 6.6L6.7 4.5Z" fill="#f8cc8e"/>
<path d="M9.5 6.5L12 8.9L9.5 11.3L7 8.9Z" fill="#f8cc8e"/>
<path d="M5.5 5V8.5H7.6M5.8 4.2H7.2" stroke="#f8cc8e" stroke-width="1" fill="none"/><path d="M12.6 15.1C11.2 13.8 10.1 12.9 10.1 11.6C10.1 10.5 10.8 9.7 11.55 9.7C12.05 9.7 12.45 10.05 12.6 10.5C12.75 10.05 13.15 9.7 13.65 9.7C14.4 9.7 15.1 10.5 15.1 11.6C15.1 12.9 14 13.8 12.6 15.1Z" fill="#c8c8c8" stroke="#252526" stroke-width="0.7" paint-order="stroke"/></svg><div class="t" style="left:95.70px;letter-spacing:-0.191px;top:3px;color:#4ec9b0;">SpecialAttributeStartEve</div><div class="t" style="left:220.75px;letter-spacing:-0.300px;top:3px;color:#4ec9b0;">nt</div></div>
<div class="row" style="top:443px;"><svg style="left:62.5px;top:3px" width="6" height="11" viewBox="0 0 6 11"><path d="M0.5 0.6L4.7 5.2L0.5 9.8Z" fill="none" stroke="#f1f1f1" stroke-width="1"/></svg><svg style="left:73px;top:1px" width="16" height="16" viewBox="0 0 16 16">
<path d="M3.1 0.8L6.3 4L3.1 7.2L-0.1 4Z" fill="#f8cc8e"/>
<path d="M8.9 2.4L11.1 4.5L8.9 6.6L6.7 4.5Z" fill="#f8cc8e"/>
<path d="M9.5 6.5L12 8.9L9.5 11.3L7 8.9Z" fill="#f8cc8e"/>
<path d="M5.5 5V8.5H7.6M5.8 4.2H7.2" stroke="#f8cc8e" stroke-width="1" fill="none"/><path d="M12.6 15.1C11.2 13.8 10.1 12.9 10.1 11.6C10.1 10.5 10.8 9.7 11.55 9.7C12.05 9.7 12.45 10.05 12.6 10.5C12.75 10.05 13.15 9.7 13.65 9.7C14.4 9.7 15.1 10.5 15.1 11.6C15.1 12.9 14 13.8 12.6 15.1Z" fill="#c8c8c8" stroke="#252526" stroke-width="0.7" paint-order="stroke"/></svg><div class="t" style="left:95.70px;letter-spacing:-0.061px;top:3px;color:#4ec9b0;">System.Runtime.Compi</div><div class="t" style="left:220.05px;letter-spacing:-0.300px;top:3px;color:#4ec9b0;">lerServices</div></div>
<div class="row" style="top:460px;"><svg style="left:62.5px;top:3px" width="6" height="11" viewBox="0 0 6 11"><path d="M0.5 0.6L4.7 5.2L0.5 9.8Z" fill="none" stroke="#f1f1f1" stroke-width="1"/></svg><svg style="left:73px;top:1px" width="16" height="16" viewBox="0 0 16 16">
<path d="M3.1 0.8L6.3 4L3.1 7.2L-0.1 4Z" fill="#f8cc8e"/>
<path d="M8.9 2.4L11.1 4.5L8.9 6.6L6.7 4.5Z" fill="#f8cc8e"/>
<path d="M9.5 6.5L12 8.9L9.5 11.3L7 8.9Z" fill="#f8cc8e"/>
<path d="M5.5 5V8.5H7.6M5.8 4.2H7.2" stroke="#f8cc8e" stroke-width="1" fill="none"/><path d="M12.6 15.1C11.2 13.8 10.1 12.9 10.1 11.6C10.1 10.5 10.8 9.7 11.55 9.7C12.05 9.7 12.45 10.05 12.6 10.5C12.75 10.05 13.15 9.7 13.65 9.7C14.4 9.7 15.1 10.5 15.1 11.6C15.1 12.9 14 13.8 12.6 15.1Z" fill="#c8c8c8" stroke="#252526" stroke-width="0.7" paint-order="stroke"/></svg><div class="t" style="left:95.95px;letter-spacing:-0.332px;top:3px;color:#4ec9b0;">XmlSchemaKeyGetByte</div><div class="t" style="left:218.43px;letter-spacing:-0.300px;top:3px;color:#4ec9b0;">s</div></div>
<div class="row" style="top:477px;"><svg style="left:62.5px;top:3px" width="6" height="11" viewBox="0 0 6 11"><path d="M0.5 0.6L4.7 5.2L0.5 9.8Z" fill="none" stroke="#f1f1f1" stroke-width="1"/></svg><svg style="left:73px;top:1px" width="16" height="16" viewBox="0 0 16 16">
<path d="M3.1 0.8L6.3 4L3.1 7.2L-0.1 4Z" fill="#f8cc8e"/>
<path d="M8.9 2.4L11.1 4.5L8.9 6.6L6.7 4.5Z" fill="#f8cc8e"/>
<path d="M9.5 6.5L12 8.9L9.5 11.3L7 8.9Z" fill="#f8cc8e"/>
<path d="M5.5 5V8.5H7.6M5.8 4.2H7.2" stroke="#f8cc8e" stroke-width="1" fill="none"/><path d="M12.6 15.1C11.2 13.8 10.1 12.9 10.1 11.6C10.1 10.5 10.8 9.7 11.55 9.7C12.05 9.7 12.45 10.05 12.6 10.5C12.75 10.05 13.15 9.7 13.65 9.7C14.4 9.7 15.1 10.5 15.1 11.6C15.1 12.9 14 13.8 12.6 15.1Z" fill="#c8c8c8" stroke="#252526" stroke-width="0.7" paint-order="stroke"/></svg><div class="t" style="left:98.50px;letter-spacing:-0.300px;top:3px;color:#4ec9b0;">V</div><div class="t" style="left:108.90px;letter-spacing:-0.300px;top:3px;color:#4ec9b0;">M</div><div class="t" style="left:121.58px;letter-spacing:-0.300px;top:3px;color:#4ec9b0;">G</div><div class="t" style="left:134.45px;letter-spacing:-0.300px;top:3px;color:#4ec9b0;">u</div><div class="t" style="left:146.70px;letter-spacing:-0.300px;top:3px;color:#4ec9b0;">a</div><div class="t" style="left:159.45px;letter-spacing:-0.300px;top:3px;color:#4ec9b0;">r</div><div class="t" style="left:170.10px;letter-spacing:-0.300px;top:3px;color:#4ec9b0;">d</div><div class="t" style="left:182.96px;transform:scaleX(0.8488);transform-origin:0 0;top:3px;color:#dcdcdc;">@</div><div class="t" style="left:193.55px;transform:scaleX(0.9000);transform-origin:0 0;top:3px;color:#b5cea8;">02000002</div></div>
<div class="row" style="top:494px;"><svg style="left:62.5px;top:3px" width="6" height="11" viewBox="0 0 6 11"><path d="M0.5 0.6L4.7 5.2L0.5 9.8Z" fill="none" stroke="#f1f1f1" stroke-width="1"/></svg><svg style="left:73px;top:1px" width="16" height="16" viewBox="0 0 16 16">
<path d="M3.1 0.8L6.3 4L3.1 7.2L-0.1 4Z" fill="#f8cc8e"/>
<path d="M8.9 2.4L11.1 4.5L8.9 6.6L6.7 4.5Z" fill="#f8cc8e"/>
<path d="M9.5 6.5L12 8.9L9.5 11.3L7 8.9Z" fill="#f8cc8e"/>
<path d="M5.5 5V8.5H7.6M5.8 4.2H7.2" stroke="#f8cc8e" stroke-width="1" fill="none"/><path d="M12.6 15.1C11.2 13.8 10.1 12.9 10.1 11.6C10.1 10.5 10.8 9.7 11.55 9.7C12.05 9.7 12.45 10.05 12.6 10.5C12.75 10.05 13.15 9.7 13.65 9.7C14.4 9.7 15.1 10.5 15.1 11.6C15.1 12.9 14 13.8 12.6 15.1Z" fill="#c8c8c8" stroke="#252526" stroke-width="0.7" paint-order="stroke"/></svg><div class="a" style="left:94px;top:1px;width:142px;height:17px;background:#4f4f4f"></div><div class="t" style="left:98.50px;letter-spacing:-0.300px;top:3px;color:#4ec9b0;">V</div><div class="t" style="left:108.90px;letter-spacing:-0.300px;top:3px;color:#4ec9b0;">M</div><div class="t" style="left:121.58px;letter-spacing:-0.300px;top:3px;color:#4ec9b0;">G</div><div class="t" style="left:134.45px;letter-spacing:-0.300px;top:3px;color:#4ec9b0;">u</div><div class="t" style="left:146.70px;letter-spacing:-0.300px;top:3px;color:#4ec9b0;">a</div><div class="t" style="left:159.45px;letter-spacing:-0.300px;top:3px;color:#4ec9b0;">r</div><div class="t" style="left:170.10px;letter-spacing:-0.300px;top:3px;color:#4ec9b0;">d</div><div class="t" style="left:180.00px;letter-spacing:-0.300px;top:3px;color:#4ec9b0;">-</div><div class="t" style="left:184.77px;transform:scaleX(0.9019);transform-origin:0 0;top:3px;color:#4ec9b0;">433133</div></div>
<div class="row" style="top:511px;"><svg style="left:62.5px;top:3px" width="6" height="11" viewBox="0 0 6 11"><path d="M0.5 0.6L4.7 5.2L0.5 9.8Z" fill="none" stroke="#f1f1f1" stroke-width="1"/></svg><svg style="left:73px;top:1px" width="16" height="16" viewBox="0 0 16 16">
<path d="M5 1.2L9.3 5.5L5 9.8L0.7 5.5Z" fill="#f8cc8e"/>
<path d="M12.7 4.4L15.1 6.8L12.7 9.2L10.3 6.8Z" fill="#f8cc8e"/>
<path d="M12.5 9.7L15.2 12.4L12.5 15.1L9.8 12.4Z" fill="#f8cc8e"/>
<path d="M8.5 7.5V12.5H10.5" stroke="#f8cc8e" stroke-width="1" fill="none"/></svg><div class="t" style="left:98.50px;letter-spacing:-0.300px;top:3px;color:#4ec9b0;">V</div><div class="t" style="left:108.90px;letter-spacing:-0.300px;top:3px;color:#4ec9b0;">M</div><div class="t" style="left:121.58px;letter-spacing:-0.300px;top:3px;color:#4ec9b0;">G</div><div class="t" style="left:134.45px;letter-spacing:-0.300px;top:3px;color:#4ec9b0;">u</div><div class="t" style="left:146.70px;letter-spacing:-0.300px;top:3px;color:#4ec9b0;">a</div><div class="t" style="left:159.45px;letter-spacing:-0.300px;top:3px;color:#4ec9b0;">r</div><div class="t" style="left:170.10px;letter-spacing:-0.300px;top:3px;color:#4ec9b0;">d</div><div class="t" style="left:180.00px;letter-spacing:-0.300px;top:3px;color:#4ec9b0;">-</div><div class="t" style="left:184.78px;transform:scaleX(0.8611);transform-origin:0 0;top:3px;color:#4ec9b0;">469471</div><div class="t" style="left:219.51px;transform:scaleX(0.9000);transform-origin:0 0;top:3px;color:#4ec9b0;">18</div></div>
<div class="row" style="top:528px;"><svg style="left:62.5px;top:3px" width="6" height="11" viewBox="0 0 6 11"><path d="M0.5 0.6L4.7 5.2L0.5 9.8Z" fill="none" stroke="#f1f1f1" stroke-width="1"/></svg><svg style="left:73px;top:1px" width="16" height="16" viewBox="0 0 16 16">
<path d="M3.1 0.8L6.3 4L3.1 7.2L-0.1 4Z" fill="#f8cc8e"/>
<path d="M8.9 2.4L11.1 4.5L8.9 6.6L6.7 4.5Z" fill="#f8cc8e"/>
<path d="M9.5 6.5L12 8.9L9.5 11.3L7 8.9Z" fill="#f8cc8e"/>
<path d="M5.5 5V8.5H7.6M5.8 4.2H7.2" stroke="#f8cc8e" stroke-width="1" fill="none"/><path d="M12.6 15.1C11.2 13.8 10.1 12.9 10.1 11.6C10.1 10.5 10.8 9.7 11.55 9.7C12.05 9.7 12.45 10.05 12.6 10.5C12.75 10.05 13.15 9.7 13.65 9.7C14.4 9.7 15.1 10.5 15.1 11.6C15.1 12.9 14 13.8 12.6 15.1Z" fill="#c8c8c8" stroke="#252526" stroke-width="0.7" paint-order="stroke"/></svg><div class="t" style="left:98.50px;letter-spacing:-0.300px;top:3px;color:#4ec9b0;">V</div><div class="t" style="left:108.90px;letter-spacing:-0.300px;top:3px;color:#4ec9b0;">M</div><div class="t" style="left:121.58px;letter-spacing:-0.300px;top:3px;color:#4ec9b0;">G</div><div class="t" style="left:134.45px;letter-spacing:-0.300px;top:3px;color:#4ec9b0;">u</div><div class="t" style="left:146.70px;letter-spacing:-0.300px;top:3px;color:#4ec9b0;">a</div><div class="t" style="left:159.45px;letter-spacing:-0.300px;top:3px;color:#4ec9b0;">r</div><div class="t" style="left:170.10px;letter-spacing:-0.300px;top:3px;color:#4ec9b0;">d</div></div>
<div class="row" style="top:545px;"><svg style="left:62.5px;top:3px" width="6" height="11" viewBox="0 0 6 11"><path d="M0.5 0.6L4.7 5.2L0.5 9.8Z" fill="none" stroke="#f1f1f1" stroke-width="1"/></svg><svg style="left:73px;top:1px" width="16" height="16" viewBox="0 0 16 16">
<path d="M3.1 0.8L6.3 4L3.1 7.2L-0.1 4Z" fill="#f8cc8e"/>
<path d="M8.9 2.4L11.1 4.5L8.9 6.6L6.7 4.5Z" fill="#f8cc8e"/>
<path d="M9.5 6.5L12 8.9L9.5 11.3L7 8.9Z" fill="#f8cc8e"/>
<path d="M5.5 5V8.5H7.6M5.8 4.2H7.2" stroke="#f8cc8e" stroke-width="1" fill="none"/><path d="M12.6 15.1C11.2 13.8 10.1 12.9 10.1 11.6C10.1 10.5 10.8 9.7 11.55 9.7C12.05 9.7 12.45 10.05 12.6 10.5C12.75 10.05 13.15 9.7 13.65 9.7C14.4 9.7 15.1 10.5 15.1 11.6C15.1 12.9 14 13.8 12.6 15.1Z" fill="#c8c8c8" stroke="#252526" stroke-width="0.7" paint-order="stroke"/></svg><div class="t" style="left:98.50px;letter-spacing:-0.300px;top:3px;color:#4ec9b0;opacity:.55;">V</div><div class="t" style="left:108.90px;letter-spacing:-0.300px;top:3px;color:#4ec9b0;opacity:.55;">M</div><div class="t" style="left:121.58px;letter-spacing:-0.300px;top:3px;color:#4ec9b0;opacity:.55;">G</div><div class="t" style="left:134.45px;letter-spacing:-0.300px;top:3px;color:#4ec9b0;opacity:.55;">u</div><div class="t" style="left:146.70px;letter-spacing:-0.300px;top:3px;color:#4ec9b0;opacity:.55;">a</div><div class="t" style="left:159.45px;letter-spacing:-0.300px;top:3px;color:#4ec9b0;opacity:.55;">r</div><div class="t" style="left:170.10px;letter-spacing:-0.300px;top:3px;color:#4ec9b0;opacity:.55;">d</div><div class="t" style="left:180.00px;letter-spacing:-0.300px;top:3px;color:#4ec9b0;opacity:.55;">-</div><div class="t" style="left:184.43px;transform:scaleX(0.9077);transform-origin:0 0;top:3px;color:#4ec9b0;opacity:.55;">729960</div></div>
<div class="row" style="top:562px;"><svg style="left:62.5px;top:3px" width="6" height="11" viewBox="0 0 6 11"><path d="M0.5 0.6L4.7 5.2L0.5 9.8Z" fill="none" stroke="#f1f1f1" stroke-width="1"/></svg><svg style="left:73px;top:1px" width="16" height="16" viewBox="0 0 16 16">
<path d="M3.1 0.8L6.3 4L3.1 7.2L-0.1 4Z" fill="#f8cc8e"/>
<path d="M8.9 2.4L11.1 4.5L8.9 6.6L6.7 4.5Z" fill="#f8cc8e"/>
<path d="M9.5 6.5L12 8.9L9.5 11.3L7 8.9Z" fill="#f8cc8e"/>
<path d="M5.5 5V8.5H7.6M5.8 4.2H7.2" stroke="#f8cc8e" stroke-width="1" fill="none"/><path d="M12.6 15.1C11.2 13.8 10.1 12.9 10.1 11.6C10.1 10.5 10.8 9.7 11.55 9.7C12.05 9.7 12.45 10.05 12.6 10.5C12.75 10.05 13.15 9.7 13.65 9.7C14.4 9.7 15.1 10.5 15.1 11.6C15.1 12.9 14 13.8 12.6 15.1Z" fill="#c8c8c8" stroke="#252526" stroke-width="0.7" paint-order="stroke"/></svg><div class="t" style="left:98.50px;letter-spacing:-0.300px;top:3px;color:#4ec9b0;">V</div><div class="t" style="left:108.90px;letter-spacing:-0.300px;top:3px;color:#4ec9b0;">M</div><div class="t" style="left:121.58px;letter-spacing:-0.300px;top:3px;color:#4ec9b0;">G</div><div class="t" style="left:134.45px;letter-spacing:-0.300px;top:3px;color:#4ec9b0;">u</div><div class="t" style="left:146.70px;letter-spacing:-0.300px;top:3px;color:#4ec9b0;">a</div><div class="t" style="left:159.45px;letter-spacing:-0.300px;top:3px;color:#4ec9b0;">r</div><div class="t" style="left:170.10px;letter-spacing:-0.300px;top:3px;color:#4ec9b0;">d</div><div class="t" style="left:180.00px;letter-spacing:-0.300px;top:3px;color:#4ec9b0;">-</div><div class="t" style="left:184.55px;transform:scaleX(0.9077);transform-origin:0 0;top:3px;color:#4ec9b0;">933082</div></div>
<div class="row" style="top:579px;"><svg style="left:43.5px;top:3px" width="6" height="11" viewBox="0 0 6 11"><path d="M0.5 0.6L4.7 5.2L0.5 9.8Z" fill="none" stroke="#f1f1f1" stroke-width="1"/></svg><svg style="left:56px;top:3px" width="13" height="13" viewBox="0 0 13 13" fill="none" stroke="#d8d8d8" stroke-width="1.9"><path d="M4.2 0.9C2.3 0.9 2.2 1.6 2.2 2.6V4.4C2.2 5.5 1.8 6.1 0.4 6.1C1.8 6.1 2.2 6.8 2.2 7.8V9.6C2.2 10.7 2.3 11.4 4.2 11.4"/><path d="M8.2 0.9C10.1 0.9 10.2 1.6 10.2 2.6V4.4C10.2 5.5 10.6 6.1 12 6.1C10.6 6.1 10.2 6.8 10.2 7.8V9.6C10.2 10.7 10.1 11.4 8.2 11.4"/></svg></div>
</div>
<div class="a" style="left:225px;top:79px;width:17px;height:602px;background:#3e3e42"></div>
<svg style="left:229px;top:85px" width="9" height="5" viewBox="0 0 9 5"><path d="M0 5L4.5 0L9 5Z" fill="#999"/></svg>
<div class="a" style="left:229px;top:96px;width:9px;height:491px;background:#686868"></div>
<svg style="left:229px;top:652px" width="9" height="5" viewBox="0 0 9 5"><path d="M0 0L4.5 5L9 0Z" fill="#999"/></svg>
<div class="a" style="left:4px;top:663px;width:238px;height:18px;background:#3e3e42"></div>
<svg style="left:10px;top:667px" width="5" height="9" viewBox="0 0 5 9"><path d="M5 0L0 4.5L5 9Z" fill="#999"/></svg>
<div class="a" style="left:21px;top:667px;width:87px;height:9px;background:#686868"></div>
<svg style="left:214px;top:667px" width="5" height="9" viewBox="0 0 5 9"><path d="M0 0L5 4.5L0 9Z" fill="#999"/></svg>
<div class="a" style="left:249px;top:57px;width:33px;height:22px;background:#3f3f46"></div>
<div class="t" style="left:253px;top:61px">-</div>
<svg style="left:267px;top:64px" width="10" height="8" viewBox="0 0 10 8"><path d="M0.5 0L9.5 8M9.5 0L0.5 8" stroke="#6e6e72" stroke-width="1.5" fill="none"/></svg>
<div class="a" style="left:249px;top:78px;width:1038px;height:2px;background:#3f3f46"></div>
<div class="a" style="left:249px;top:80px;width:1021px;height:329px;background:#1e1e1e"></div>
<div class="a" style="left:249px;top:80px;width:17px;height:329px;background:#333334"></div>
<div class="a" style="left:318px;top:80px;width:952px;height:13px;background:#242424;border:2px solid #292929;border-right:0"></div>
<div class="ln mono" style="top:79px">1</div><div class="cl mono" style="top:79px"><span class="sl">//</span></div>
<div class="ln mono" style="top:92px">2</div><div class="cl mono" style="top:92px"><span class="sl">//</span></div>
<div class="ln mono" style="top:108px">3</div><div class="cl mono" style="top:108px"><span class="sl">//</span> Types:</div>
<div class="ln mono" style="top:121px">4</div><div class="cl mono" style="top:121px"><span class="sl">//</span></div>
<div class="ln mono" style="top:137px">5</div><div class="cl mono" style="top:137px"><span class="sl">//</span> &lt;FindMethods&gt;d__0get_DropDown</div>
<div class="ln mono" style="top:153px">6</div><div class="cl mono" style="top:153px"><span class="sl">//</span> &lt;HTTP_TIMEOUT_LIMIT_INFOShowPropertyFrame&gt;</div>
<div class="ln mono" style="top:169px">7</div><div class="cl mono" style="top:169px"><span class="sl">//</span> &lt;IsNestedFamily&gt;</div>
<div class="ln mono" style="top:185px">8</div><div class="cl mono" style="top:185px"><span class="sl">//</span> &lt;manifest&gt;</div>
<div class="ln mono" style="top:201px">9</div><div class="cl mono" style="top:201px"><span class="sl">//</span> &lt;manifestResourceStream.Seek&gt;</div>
<div class="ln mono" style="top:217px">10</div><div class="cl mono" style="top:217px"><span class="sl">//</span> &lt;Module&gt;</div>
<div class="ln mono" style="top:233px">11</div><div class="cl mono" style="top:233px"><span class="sl">//</span> &lt;ParseElementOnlyContentAsync&gt;d__165get_ElementType</div>
<div class="ln mono" style="top:249px">12</div><div class="cl mono" style="top:249px"><span class="sl">//</span> &lt;PropertyDescriptorCollection.GetEnumerator&gt;</div>
<div class="ln mono" style="top:265px">13</div><div class="cl mono" style="top:265px"><span class="sl">//</span> &lt;System.Runtime.CompilerServices&gt;</div>
<div class="ln mono" style="top:281px">14</div><div class="cl mono" style="top:281px"><span class="sl">//</span> ConsumerNumset_StateImageKey</div>
<div class="ln mono" style="top:297px">15</div><div class="cl mono" style="top:297px"><span class="sl">//</span> ConvertBinderset_NewLineOnAttributes</div>
<div class="ln mono" style="top:313px">16</div><div class="cl mono" style="top:313px"><span class="sl">//</span> Disguised</div>
<div class="ln mono" style="top:329px">17</div><div class="cl mono" style="top:329px"><span class="sl">//</span> DSAFIPSVERSION_ENUMGetSourceIndex</div>
<div class="ln mono" style="top:345px">18</div><div class="cl mono" style="top:345px"><span class="sl">//</span> EventArgsset_Text</div>
<div class="ln mono" style="top:361px">19</div><div class="cl mono" style="top:361px"><span class="sl">//</span> manifest</div>
<div class="ln mono" style="top:377px">20</div><div class="cl mono" style="top:377px"><span class="sl">//</span> manifestResourceStream.Seek</div>
<div class="ln mono" style="top:393px">21</div><div class="cl mono" style="top:393px"><span class="sl">//</span> MetafileHeaderEmfMoveWhile</div>
<div class="a" style="left:1270px;top:80px;width:17px;height:329px;background:#3e3e42"></div>
<svg style="left:1274px;top:86px" width="9" height="5" viewBox="0 0 9 5"><path d="M0 5L4.5 0L9 5Z" fill="#999"/></svg>
<div class="a" style="left:1274px;top:97px;width:9px;height:115px;background:#686868"></div>
<svg style="left:1274px;top:398px" width="9" height="5" viewBox="0 0 9 5"><path d="M0 0L4.5 5L9 0Z" fill="#999"/></svg>
<div class="a" style="left:249px;top:409px;width:1038px;height:17px;background:#3e3e42"></div>
<div class="a" style="left:249px;top:409px;width:60px;height:17px;background:#1f1f20;border:1px solid #434346"></div>
<div class="a" style="left:296px;top:410px;width:1px;height:15px;background:#434346"></div>
<div class="t" style="left:253.93px;letter-spacing:-0.975px;top:411px;">100</div>
<div class="t" style="left:275.42px;transform:scaleX(1.0025);transform-origin:0 0;top:411px;">%</div>
<svg style="left:300px;top:417px" width="6" height="3" viewBox="0 0 6 3"><path d="M0 0H6L3 3Z" fill="#f1f1f1"/></svg>
<svg style="left:315px;top:413px" width="5" height="9" viewBox="0 0 5 9"><path d="M5 0L0 4.5L5 9Z" fill="#555558"/></svg>
<svg style="left:1259px;top:413px" width="5" height="9" viewBox="0 0 5 9"><path d="M0 0L5 4.5L0 9Z" fill="#555558"/></svg>
<div class="a" style="left:249px;top:432px;width:1038px;height:229px;background:#252526;border:1px solid #3f3f46"></div>
<div class="a" style="left:250px;top:433px;width:1036px;height:21px;background:#2d2d30"></div>
<div class="t" style="left:253.60px;letter-spacing:-0.195px;top:437px;">Locals</div>
<svg style="left:298px;top:441px" width="947" height="5" viewBox="0 0 947 5" shape-rendering="crispEdges"><defs><pattern id="gg" width="4" height="4" patternUnits="userSpaceOnUse"><rect x="0" y="0" width="1" height="1" fill="#46464a"/><rect x="2" y="2" width="1" height="1" fill="#46464a"/></pattern></defs><rect width="947" height="5" fill="url(#gg)"/></svg>
<svg style="left:1255px;top:441px" width="8" height="4" viewBox="0 0 8 4"><path d="M0 0H8L4 4Z" fill="#f1f1f1"/></svg>
<svg style="left:1270px;top:439px" width="10" height="8" viewBox="0 0 10 8"><path d="M0.5 0L9.5 8M9.5 0L0.5 8" stroke="#f1f1f1" stroke-width="1.6" fill="none"/></svg>
<div class="a" style="left:252px;top:454px;width:1032px;height:1px;background:#3f3f46"></div>
<div class="a" style="left:252px;top:473px;width:1032px;height:1px;background:#3f3f46"></div>
<div class="a" style="left:651px;top:455px;width:1px;height:18px;background:#3f3f46"></div>
<div class="a" style="left:1051px;top:455px;width:1px;height:18px;background:#3f3f46"></div>
<div class="a" style="left:1251px;top:455px;width:1px;height:18px;background:#3f3f46"></div>
<div class="t" style="left:257.50px;letter-spacing:0.367px;top:457px;">Name</div>
<div class="t" style="left:658.00px;letter-spacing:-0.262px;top:457px;">Value</div>
<div class="t" style="left:1059.05px;letter-spacing:-0.350px;top:457px;">Type</div>
<div class="a" style="left:350px;top:660px;width:45px;height:21px;background:#252526;border:1px solid #3f3f46;border-top:0"></div>
<div class="t" style="left:253.70px;letter-spacing:0.217px;top:664px;">Modules</div>
<div class="t" style="left:309.80px;letter-spacing:-0.430px;top:664px;">Search</div>
<div class="t" style="left:355.30px;letter-spacing:-0.215px;top:663px;color:#0097fb;">Locals</div>
<div class="a" style="left:183px;top:610px;width:323px;height:25px;background:#1f1f20;border:1px solid #505053"></div>
<div class="t" style="left:192.40px;letter-spacing:-0.300px;top:616px;color:#4ec9b0;">V</div><div class="t" style="left:202.80px;letter-spacing:-0.300px;top:616px;color:#4ec9b0;">M</div><div class="t" style="left:215.47px;letter-spacing:-0.300px;top:616px;color:#4ec9b0;">G</div><div class="t" style="left:228.35px;letter-spacing:-0.300px;top:616px;color:#4ec9b0;">u</div><div class="t" style="left:240.60px;letter-spacing:-0.300px;top:616px;color:#4ec9b0;">a</div><div class="t" style="left:253.35px;letter-spacing:-0.300px;top:616px;color:#4ec9b0;">r</div><div class="t" style="left:264.00px;letter-spacing:-0.300px;top:616px;color:#4ec9b0;">d</div>
<div class="t" style="left:274.60px;letter-spacing:-0.300px;top:616px;color:#4ec9b0;">-</div>
<div class="t" style="left:279.08px;transform:scaleX(0.8894);transform-origin:0 0;top:616px;color:#4ec9b0;">43313318385962381733806150</div>
<div class="t" style="left:438.47px;transform:scaleX(0.8390);transform-origin:0 0;top:616px;color:#dcdcdc;">@</div>
<div class="t" style="left:448.54px;transform:scaleX(0.9159);transform-origin:0 0;top:616px;color:#b5cea8;">0200000D</div>
</body></html>
